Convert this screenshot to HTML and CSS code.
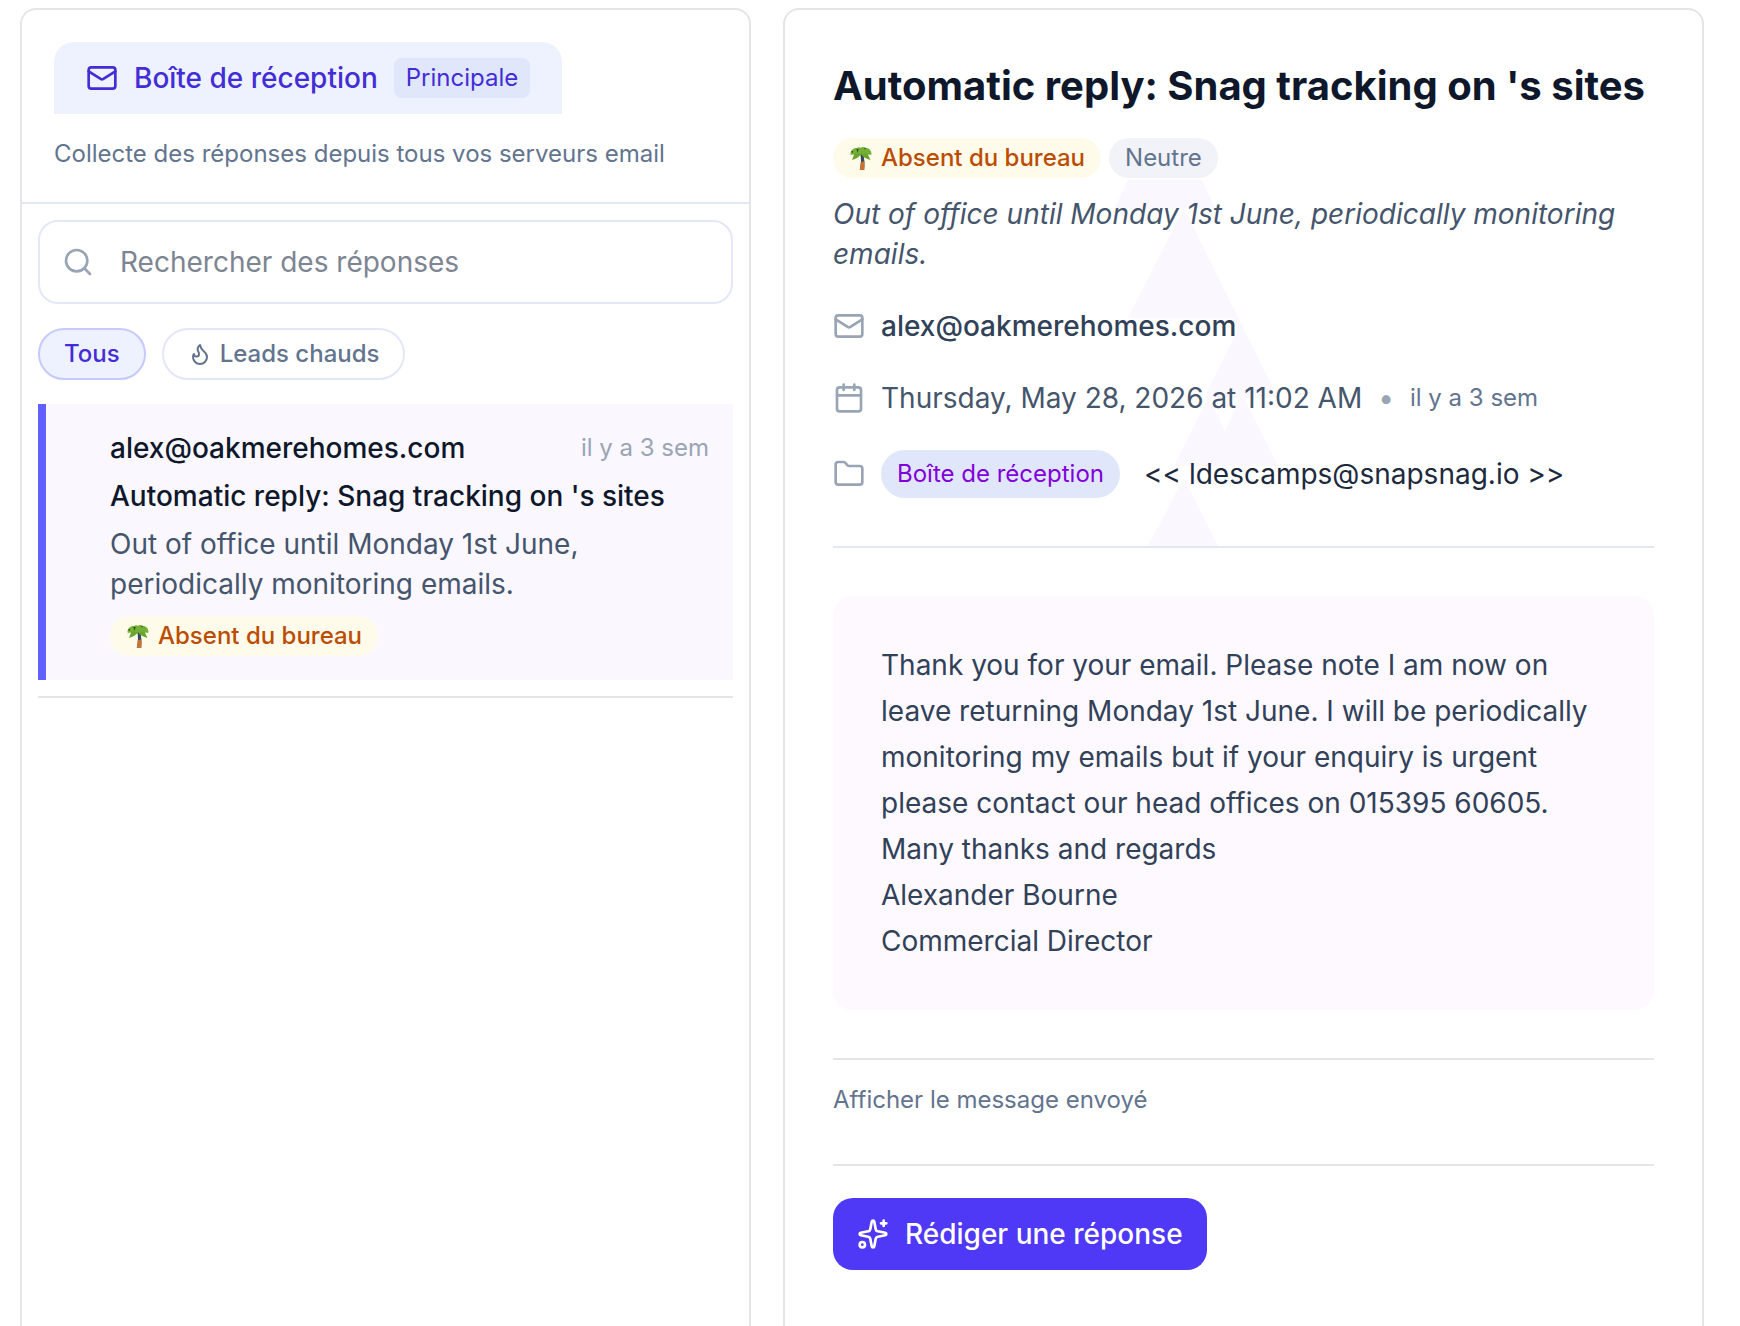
FILE: index.html
```html
<!DOCTYPE html>
<html lang="fr">
<head>
  <meta charset="UTF-8">
  <meta name="viewport" content="width=device-width, initial-scale=1.0">
  <title>Boîte de réception</title>
  <link rel="stylesheet" href="styles.css">
</head>
<body>
  <!-- Icônes partagées -->
  <svg class="sprite" aria-hidden="true">
    <symbol id="icon-mail" viewBox="0 0 24 24">
      <path d="m22 7-8.991 5.727a2 2 0 0 1-2.009 0L2 7"/>
      <rect x="2" y="4" width="20" height="16" rx="2"/>
    </symbol>
    <symbol id="icon-palm" viewBox="0 0 24 24">
      <path fill="#34495e" d="M11 7c1.300 5 1.400 10-.2 17h4.400c.6-6 .2-12-1.200-17z"/>
      <path fill="#c9722f" d="M11.700 16.500l3.700-1.500c.2 3 .1 6-.2 9h-4.400c.5-2.700.8-5 .9-7.500z"/>
      <path fill="#6aa52e" d="M12 8C9.500 4 5 4.500 1 9.500c2-1 3-1 4-.8L3 14c4-1.200 7.500-3 9-6z"/>
      <path fill="#6aa52e" d="M12 8c2.500-4 7-3.500 11 1.500-2-1-3-1-4-.8l2.500 5.300C17.500 12.800 13.500 11 12 8z"/>
      <path fill="#74b033" d="M12 8.500C9 7 6 7.500 1.500 8 1.500 4 5 1.500 8 2c1-1.200 3-1 4-.3 1.500-1 3-.7 4 .3 3.500-.7 6.500 2 6.500 6C18 7.500 15 7 12 8.500z"/>
      <path fill="#27401f" d="M7.500 3l1.200 4L9.500 3zM15 1.800l1 2 .8-2zM2 5.500l1.500 1.500.5-2z"/>
    </symbol>
  </svg>

  <main class="inbox">
    <!-- Liste des réponses -->
    <section class="panel">
      <header class="list-header">
        <a class="tab" href="#">
          <svg class="icon"><use href="#icon-mail"/></svg>
          Boîte de réception
          <span class="tab-badge">Principale</span>
        </a>
        <p class="small">Collecte des réponses depuis tous vos serveurs email</p>
      </header>

      <div class="list-body">
        <label class="search">
          <svg class="icon" viewBox="0 0 24 24" aria-hidden="true">
            <circle cx="11" cy="11" r="8"/>
            <path d="m21 21-4.300-4.300"/>
          </svg>
          <input type="search" placeholder="Rechercher des réponses" aria-label="Rechercher des réponses">
        </label>

        <div class="filters">
          <button class="filter active" type="button">Tous</button>
          <button class="filter" type="button">
            <svg class="icon icon-sm" viewBox="0 0 24 24" aria-hidden="true">
              <path d="M8.500 14.500A2.500 2.500 0 0 0 11 12c0-1.380-.5-2-1-3-1.072-2.143-.224-4.054 2-6 .5 2.500 2 4.900 4 6.500 2 1.600 3 3.500 3 5.500a7 7 0 1 1-14 0c0-1.153.433-2.294 1-3a2.500 2.500 0 0 0 2.500 2.500z"/>
            </svg>
            Leads chauds
          </button>
        </div>

        <ul class="replies">
          <li>
            <article class="reply">
              <div class="reply-top">
                <strong>alex@oakmerehomes.com</strong>
                <time>il y a 3 sem</time>
              </div>
              <h3>Automatic reply: Snag tracking on 's sites</h3>
              <p>Out of office until Monday 1st June, periodically monitoring emails.</p>
              <span class="badge badge-away"><svg class="palm"><use href="#icon-palm"/></svg>Absent du bureau</span>
            </article>
          </li>
        </ul>
      </div>
    </section>

    <!-- Message ouvert -->
    <section class="panel detail">
      <header class="detail-header">
        <svg class="watermark" viewBox="0 0 166 366" aria-hidden="true">
          <path d="M15 0H89L102 28H2z"/>
          <path d="M71 28L159 206L165 218H91L125 150L119 138H15z"/>
          <path d="M61 286L95 218H97L112 252L127 218H131L165 286z"/>
          <path d="M71 298L105 366H35z"/>
        </svg>
        <h1>Automatic reply: Snag tracking on 's sites</h1>
        <div class="badges">
          <span class="badge badge-away"><svg class="palm"><use href="#icon-palm"/></svg>Absent du bureau</span>
          <span class="badge badge-neutral">Neutre</span>
        </div>
        <p class="summary">Out of office until Monday 1st June, periodically monitoring emails.</p>

        <div class="meta">
          <div class="meta-row">
            <svg class="icon"><use href="#icon-mail"/></svg>
            <span class="sender">alex@oakmerehomes.com</span>
          </div>
          <div class="meta-row">
            <svg class="icon" viewBox="0 0 24 24" aria-hidden="true">
              <path d="M8 2v4M16 2v4M3 10h18"/>
              <rect x="3" y="4" width="18" height="18" rx="2"/>
            </svg>
            <span>Thursday, May 28, 2026 at 11:02 AM</span>
            <span class="dot">•</span>
            <span class="small">il y a 3 sem</span>
          </div>
          <div class="meta-row">
            <svg class="icon" viewBox="0 0 24 24" aria-hidden="true">
              <path d="M20 20a2 2 0 0 0 2-2V8a2 2 0 0 0-2-2h-7.900a2 2 0 0 1-1.690-.9L9.600 3.900A2 2 0 0 0 7.930 3H4a2 2 0 0 0-2 2v13a2 2 0 0 0 2 2z"/>
            </svg>
            <span class="folder">Boîte de réception</span>
            <span class="mailbox">&lt;&lt; ldescamps@snapsnag.io &gt;&gt;</span>
          </div>
        </div>
      </header>

      <div class="message">
        Thank you for your email. Please note I am now on leave returning Monday 1st June. I will be periodically monitoring my emails but if your enquiry is urgent please contact our head offices on 015395 60605.<br>
        Many thanks and regards<br>
        Alexander Bourne<br>
        Commercial Director
      </div>

      <div class="sent">
        <button class="link-button small" type="button">Afficher le message envoyé</button>
      </div>

      <footer class="actions">
        <button class="primary" type="button">
          <svg class="icon" viewBox="0 0 24 24" aria-hidden="true">
            <path d="M11.017 2.814a1 1 0 0 1 1.966 0l1.051 5.558a2 2 0 0 0 1.594 1.594l5.558 1.051a1 1 0 0 1 0 1.966l-5.558 1.051a2 2 0 0 0-1.594 1.594l-1.051 5.558a1 1 0 0 1-1.966 0l-1.051-5.558a2 2 0 0 0-1.594-1.594l-5.558-1.051a1 1 0 0 1 0-1.966l5.558-1.051a2 2 0 0 0 1.594-1.594z"/>
            <path d="M20 2v4M22 4h-4"/>
            <circle cx="4" cy="20" r="2"/>
          </svg>
          Rédiger une réponse
        </button>
      </footer>
    </section>
  </main>
</body>
</html>
```

FILE: styles.css
```css
* {
    box-sizing: border-box;
}

body {
    margin: 0;
    background: #ffffff;
    color: #45556c;
    font-family: Inter, sans-serif;
    font-size: 28px;
    line-height: 40px;
}

h1, h3, p, ul {
    margin: 0;
    padding: 0;
}

button, input {
    font: inherit;
    color: inherit;
    margin: 0;
}

button {
    cursor: pointer;
}

.sprite {
    display: none;
}

.icon {
    width: 32px;
    height: 32px;
    flex-shrink: 0;
    fill: none;
    stroke: currentColor;
    stroke-width: 2;
    stroke-linecap: round;
    stroke-linejoin: round;
}

.icon-sm {
    width: 24px;
    height: 24px;
}

.small {
    font-size: 24px;
    line-height: 32px;
    color: #62748e;
}

/* Deux colonnes */
.inbox {
    display: grid;
    grid-template-columns: 731fr 921fr;
    gap: 32px;
    min-height: 100vh;
    padding: 8px 36px 0 20px;
}

.panel {
    border: 2px solid #e5e5e5;
    border-bottom: 0;
    border-radius: 16px 16px 0 0;
}

/* Colonne de gauche */
.list-header {
    display: flex;
    flex-direction: column;
    align-items: flex-start;
    gap: 24px;
    padding: 32px;
    border-bottom: 2px solid #e2e8f0;
}

.tab {
    display: flex;
    align-items: center;
    gap: 16px;
    padding: 16px 32px;
    border-radius: 20px 20px 0 0;
    background: #eef2ff;
    color: #432dd7;
    font-weight: 500;
    text-decoration: none;
}

.tab-badge {
    padding: 0 12px;
    border-radius: 8px;
    background: #e0e7fa;
    font-size: 24px;
    font-weight: 400;
}

.list-body {
    padding: 16px;
}

.search {
    display: flex;
    align-items: center;
    gap: 26px;
    height: 84px;
    padding: 0 22px;
    border: 2px solid #e2e8f8;
    border-radius: 20px;
    color: #99a5b5;
}

.search input {
    flex: 1;
    min-width: 0;
    padding: 0;
    border: 0;
    outline: 0;
    background: none;
    color: #0f172b;
}

.search input::placeholder {
    color: #7d8592;
    opacity: 1;
}

.filters {
    display: flex;
    gap: 16px;
    margin: 24px 0;
}

.filter {
    display: flex;
    align-items: center;
    gap: 8px;
    padding: 8px 24px;
    border: 2px solid #e2e8f8;
    border-radius: 26px;
    background: #ffffff;
    color: #62748e;
    font-size: 24px;
    font-weight: 500;
    line-height: 32px;
}

.filter.active {
    border-color: #c6c9ff;
    background: #eef2ff;
    color: #432dd7;
}

.replies {
    list-style: none;
}

.replies li {
    padding-bottom: 16px;
    border-bottom: 2px solid #e5e5e5;
}

.reply {
    display: flex;
    flex-direction: column;
    align-items: flex-start;
    gap: 8px;
    padding: 24px 24px 24px 64px;
    border-left: 8px solid #615fff;
    background: #faf7ff;
}

.reply-top {
    display: flex;
    justify-content: space-between;
    align-self: stretch;
}

.reply strong,
.reply h3 {
    color: #0f172b;
    font-size: 28px;
    font-weight: 500;
}

.reply time {
    color: #99a5b5;
    font-size: 24px;
}

.reply .badge {
    margin-top: 4px;
}

.badge {
    display: inline-flex;
    align-items: center;
    gap: 8px;
    padding: 0 16px;
    border-radius: 20px;
    font-size: 24px;
}

.badge-away {
    background: #fffbeb;
    color: #bb4d00;
    font-weight: 500;
}

.badge-neutral {
    background: #f1f3f9;
    color: #62748e;
}

.palm {
    width: 24px;
    height: 24px;
}

/* Colonne de droite */
.detail {
    padding: 48px;
}

.detail-header {
    position: relative;
    padding-bottom: 48px;
    border-bottom: 2px solid #e2e8f0;
}

.detail-header > * {
    position: relative;
}

.detail-header .watermark {
    position: absolute;
    left: 280px;
    bottom: 0;
    width: 166px;
    height: 366px;
    fill: #faf7ff;
}

h1 {
    color: #0f172b;
    font-size: 40px;
    font-weight: 700;
    line-height: 56px;
}

.badges {
    display: flex;
    gap: 8px;
    margin: 24px 0 16px;
}

.summary {
    font-style: italic;
}

.meta {
    display: flex;
    flex-direction: column;
    gap: 32px;
    margin-top: 32px;
}

.meta-row {
    display: flex;
    align-items: center;
    gap: 16px;
}

.meta-row .icon,
.dot {
    color: #99a5b5;
}

.sender {
    color: #314158;
    font-weight: 500;
}

.folder {
    padding: 8px 16px;
    border-radius: 24px;
    background: #e0e7fa;
    color: #8200db;
    font-size: 24px;
    line-height: 32px;
}

.mailbox {
    margin-left: 8px;
    color: #1d293d;
}

.message {
    margin: 48px 0;
    padding: 46px 48px;
    border-radius: 20px;
    background: #fdf9ff;
    color: #314158;
    line-height: 46px;
}

.sent {
    display: flex;
    padding: 24px 0 48px;
    border-top: 2px solid #e5e5e5;
}

.link-button {
    padding: 0;
    border: 0;
    background: none;
}

.actions {
    padding-top: 32px;
    border-top: 2px solid #e5e5e5;
}

.primary {
    display: flex;
    align-items: center;
    gap: 16px;
    padding: 16px 24px;
    border: 0;
    border-radius: 20px;
    background: #4f39f6;
    color: #ffffff;
    font-weight: 500;
}
```
